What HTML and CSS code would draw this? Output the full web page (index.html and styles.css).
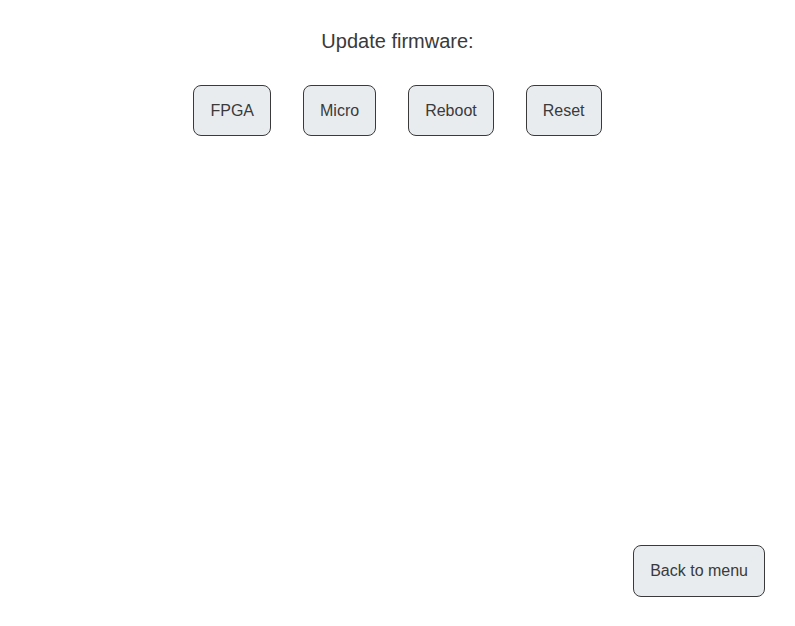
FILE: index.html
```html
<!DOCTYPE html>
<html>
<head>
<meta charset="utf-8">
<link rel="stylesheet" href="styles.css">
</head>
<body>
<div class="page">
  <h1 class="title">Update firmware:</h1>
  <div class="actions">
    <button class="btn">FPGA</button>
    <button class="btn">Micro</button>
    <button class="btn">Reboot</button>
    <button class="btn">Reset</button>
  </div>
  <div class="footer">
    <button class="btn btn-back">Back to menu</button>
  </div>
</div>
</body>
</html>
```
FILE: styles.css
```css
html, body {
  margin: 0;
  padding: 0;
  background: #ffffff;
}
body {
  font-family: "Liberation Sans", Arial, sans-serif;
  color: #3a3a3a;
}
.page {
  height: 626px;
  box-sizing: border-box;
  display: flex;
  flex-direction: column;
  padding: 29px 30px 29px 30px;
}
.title {
  margin: 0;
  font-size: 20px;
  font-weight: normal;
  line-height: 24px;
  text-align: center;
  color: #3a3a3a;
}
.actions {
  margin-top: 32px;
  display: flex;
  justify-content: center;
  gap: 32px;
}
.btn {
  font-family: "Liberation Sans", Arial, sans-serif;
  font-size: 16px;
  line-height: 18px;
  color: #3a3a3a;
  background: #e9ecef;
  border: 1px solid #3a3a3a;
  border-radius: 8px;
  padding: 0 16px;
  height: 51px;
  margin: 0;
  cursor: pointer;
}
.footer {
  margin-top: auto;
  display: flex;
  justify-content: flex-end;
}
.btn-back {
  height: 52px;
}
```
